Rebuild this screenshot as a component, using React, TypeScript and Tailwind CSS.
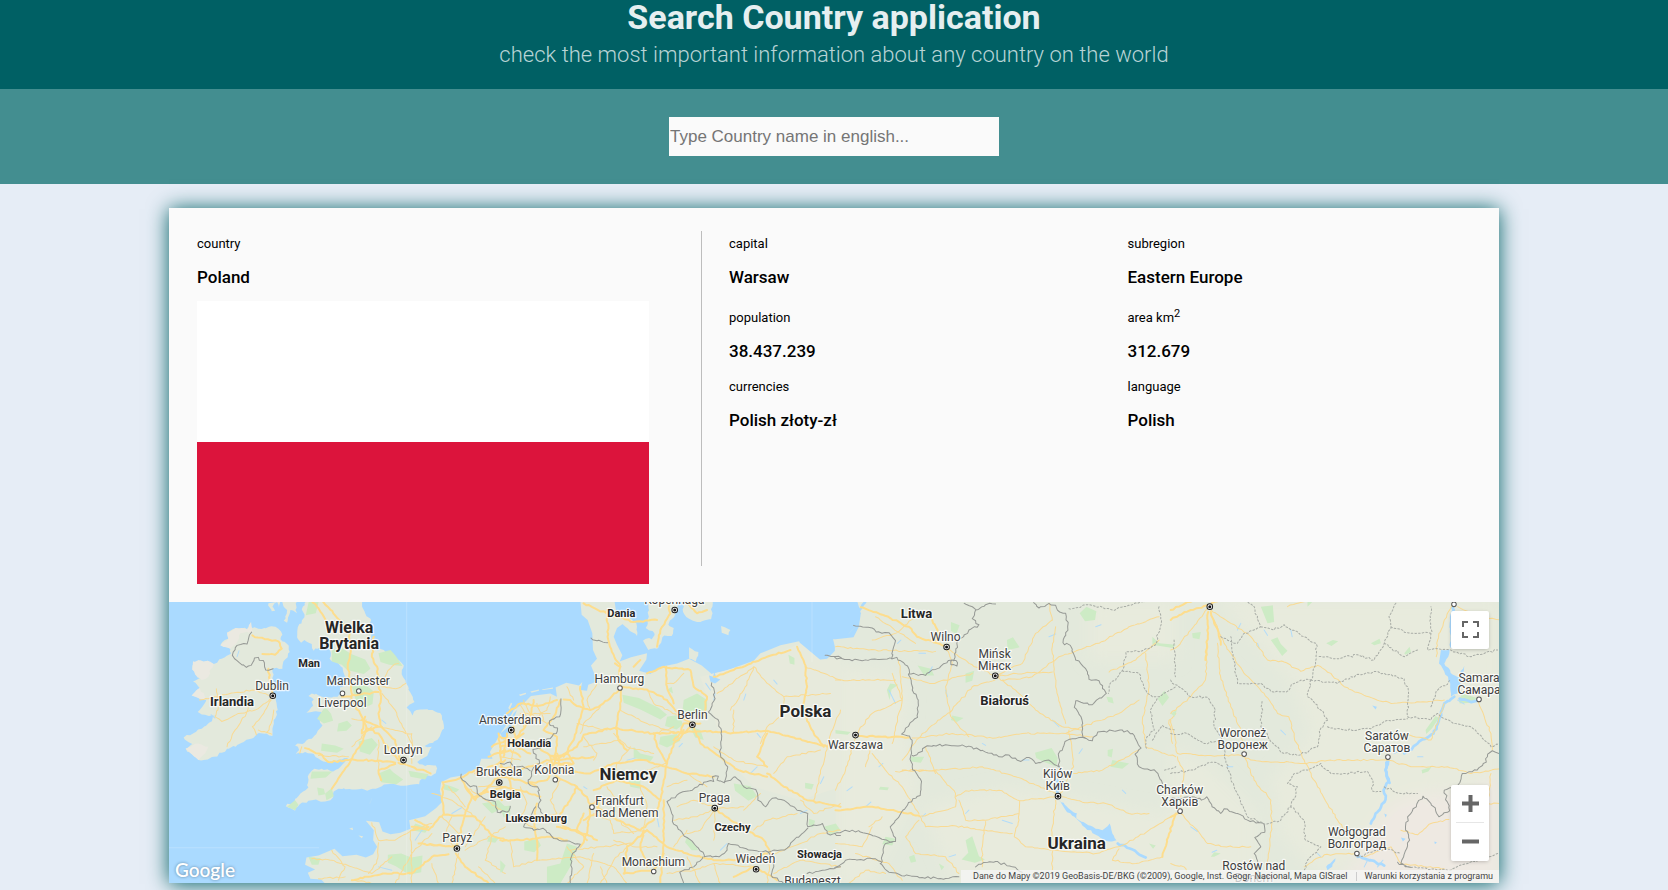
type Sheet = {
  x: number;
  land?: string[];
  tint?: string[];
  sand?: string[];
  woods?: string[];
  water?: string[];
  rivers?: string[];
  streams?: string[];
  motorways?: string[];
  roads?: string[];
  borders?: string[];
  regions?: string[];
};

type Align = "start" | "middle";
type Label = { x: number; y: number; text: string; size?: number; bold?: boolean; align?: Align };
type City = { x: number; y: number; capital?: boolean };

/* The map is described in four sheets, each at three units to the pixel. */
const WEST = -12;
const CENTRE = 993;
const EAST = 1998;
const FAR_EAST = 3003;

const sheets: Sheet[] = [
  {
    x: WEST,
    land: [
      "M426 0L410 28 418 52 398 82 396 112 408 128 418 120 440 132 446 152 468 140 480 132 494 148 498 182 518 188 534 214 542 244 524 262 530 282 500 292 470 290 440 280 430 288 446 298 438 322 424 338 446 334 470 336 464 356 472 376 458 392 440 416 412 432 390 436 402 450 392 462 420 456 446 462 466 480 494 486 530 478 550 474 526 500 504 514 470 506 440 512 428 530 430 562 406 580 388 606 362 618 378 624 390 632 404 612 440 600 480 604 496 600 506 574 536 564 560 568 590 566 606 572 622 566 650 558 690 552 726 556 762 552 776 528 806 522 814 510 812 496 780 498 756 486 786 468 800 440 778 438 804 428 826 402 836 376 830 346 802 330 754 330 742 346 724 322 748 306 736 278 722 248 710 210 716 196 690 168 656 150 628 148 614 118 618 60 600 40 590 0Z",
      "M258 66L262 84 280 86 312 80 340 86 352 104 346 118 366 132 374 156 360 178 352 206 322 206 326 244 318 262 332 300 338 330 326 360 322 408 304 400 276 402 258 416 236 426 212 440 186 446 170 458 146 470 128 478 100 480 80 462 62 446 82 432 56 412 84 400 110 386 132 368 152 346 120 344 98 336 112 320 124 298 100 294 80 286 104 264 84 244 104 234 82 208 84 184 128 182 146 192 170 176 198 160 196 146 166 136 190 116 186 98 212 84 246 88Z",
      "M828 546L856 532 890 526 940 502 948 476 982 476 974 456 990 428 1008 396 1020 380V860H490L468 838 436 836 428 818 450 808 420 794 424 772 460 766 508 746 532 768 574 764 602 772 624 762 636 740 624 720 626 690 602 662 642 666 652 694 676 702 706 698 736 686 732 660 780 648 812 624 832 604 824 572Z",
      "M352 0L366 30 356 62 366 68 376 30 396 40 392 10 400 0Z",
      "M310 10L320 34 330 32 322 20 336 6 342 24 346 4Z",
      "M426 190l8-14 8 2-6 18zM552 686l10-4 2 8zM580 706l14 2-4 6z",
    ],
    sand: [
      "M258 66L246 88 212 84 186 98 190 116 166 136 196 146 214 130 226 100 262 96Z",
      "M84 184L128 182 146 192 130 230 110 240 104 234 82 208ZM80 286L104 264 124 298 100 294ZM62 446L100 430 130 440 120 460 100 480Z",
    ],
    woods: [
      "M500 150l30-6 28 18 42 16 16 28-20 16-50-12-16-16-30-10zM640 160l36-10 16 18 20 30-40-4-26-8zM560 260l40-6 26 20-4 38-30 14-20-26zM480 320l18 22 6 20-28 8-20-14zM520 370l26-8 14 14-16 16-28 2zM470 430l40 6 26 10-20 12-48-6zM580 424l40-10 18 20-24 30-30-10zM640 520l34-14 10 10 30 22-20 14-46-6zM730 512l60 10-10 16-44-8zM456 562l20 4 4 16-20 4zM480 580l20-16 6 24-22 12zM440 514l62 0-20 18-46 4zM366 620l24-20 10 14-10 16zM432 0l30 0-10 40-30 6z",
      "M668 764l40-4 30 12 34-6-4 50-36 8-40-26-24-10zM832 550l30 10 20 8-10 8-36-8zM950 610l50-10 20 20-40 20zM970 710l30 4-10 14-24-4zM750 670l40 14-10 14-40-8zM430 770l36 4-6 20-20 0z",
    ],
    streams: [
      "M216 170l6-18M220 316l14-14M138 344l12 10M650 360l12 10M620 596l-6 14M860 640l30-18M640 800l40 10M750 720l20-30 20-8",
    ],
    motorways: [
      "M310 206L316 250 324 288M262 106L300 118 340 124 350 146 330 164 292 162",
      "M554 100L556 160 548 200 556 250 560 300 590 350 604 384 640 400 672 450 700 480M604 384L590 430 562 472 530 520 500 566",
      "M626 110L620 170 636 200 640 250 648 290 640 340 648 380 690 420 704 480",
      "M530 290L580 284 640 276M420 444L462 460 490 486 550 480 620 480 690 488M700 488L740 500 796 520M648 540L640 510 690 492",
      "M832 546L880 536 930 510M834 548L830 600 836 640 790 690 740 680M890 540L920 590 900 640 880 720 872 750M836 644L930 650 980 706 1020 720M872 760L900 800 970 850M850 762L800 770 740 820 660 820 610 830 560 840M936 590L1010 520M880 740L760 730",
      "M930 520L1020 480M920 590L1020 560M900 560L930 600 960 570 1010 600M980 440L1020 420M970 470L1020 450M1000 400L1010 500M740 690L790 680 750 660",
      "M440 0L470 40 500 90M470 0L550 90M590 360L650 380M600 350L590 400 640 380",
    ],
    roads: [
      "M140 292L190 282 262 270 310 286M154 266L160 320 150 350 170 364 220 340 270 330 300 310 324 292M250 310L244 340 210 390 186 440M318 300L296 340 262 380 274 404M326 330L318 370 306 396M104 300L150 290M280 390L320 402",
      "M650 260L700 264 722 250M650 280L690 330 712 380 740 430M648 380L740 402M560 356L604 360M620 380L560 440M660 230L680 200 700 190M410 440L404 460M460 466L550 470M740 400L740 490M640 420L640 510",
      "M620 668L640 720 690 720 740 690 800 670M640 728L634 790 610 820M736 690L740 850M440 776L500 780 560 800 620 820 680 770M460 836L540 830M900 560L960 600 1020 640M940 560L1000 560M800 580L860 600 930 650M770 730L840 740M900 750L980 706M940 800L990 850M830 650L880 700M560 840L630 850M850 560L900 620M860 650L840 700 870 750M960 650L900 740M1020 680L980 706 960 780 1020 820M690 850L740 760 800 700M500 750L540 800 520 840M800 790L820 850M880 760L860 850",
    ],
    borders: [
      "M260 96L246 132 216 136 202 166 216 182 244 202 258 196 268 174 280 172 298 188 302 210 324 206",
      "M888 522L892 540 916 560 934 558 936 580 962 598 990 604 996 636 1020 634",
    ],
  },
  {
    x: CENTRE,
    land: [
      "M-2 410L20 370 40 330 70 310 92 288 150 280 170 290 166 262 198 248 236 256 246 246 240 270 260 272 264 254 290 244 280 216 272 196 290 176 278 150 276 100 262 60 244 44 240 0H342L348 40 370 70 350 84 340 110 350 134 366 166 358 184 392 172 440 160 438 178 416 212 450 222 482 200 530 190 566 176 604 196 634 222 668 214 720 196 760 182 780 160 840 136 896 124 912 158 948 180 980 176 1006 150 996 112 1022 112V860H-2Z",
      "M434 0L446 30 436 84 462 100 456 124 476 136 486 112 514 108 520 84 504 74 526 40 540 0Z",
      "M552 0L548 36 566 56 590 66 632 58 636 20 634 0ZM358 54L384 48 408 70 410 108 388 92 366 72ZM428 122L446 114 482 126 470 146 444 150ZM662 78L690 90 684 106 664 98ZM566 142L594 156 586 184 566 176Z",
      "M24 324l8-16 4 2-8 18zM56 284l20-6 2 4-18 6zM90 274l26-6 0 4-22 6zM124 268l34-6 0 4-30 4z",
    ],
    tint: [
      "M600 230L760 190 900 130 960 180 1020 176V560L900 600 760 560 680 480 640 350Z",
    ],
    woods: [
      "M366 284l50 10 60 30 24 20-20 14-60-30-50-20zM550 300l40-20 30 20 0 30-40 10-34-6zM500 350l36-6 12 30-20 14-34-10zM480 410l50-8 10 20-40 20-24-10zM400 440l20 20 40 10-10 14-50-10zM570 380l30 10 10 30-26-8zM384 540l36 0 0 26-30-6zM700 550l50 8 20 30-26 14-40-30zM864 164l18 10 0 20-14-4zM560 710l20 20 14 20-20 0-20-24zM72 724l40-8 10 20-20 20-30-6zM140 800l40-10 20-60 30 10-20 60-30 50-40 0zM0 780l16 16-10 20-6 0zM0 620l30-4 0 30-20 6zM914 548l26 4-6 16-20-4zM926 656l18 6-6 20-14-8zM970 680l36-10 14 20-30 14zM500 270l14-10 4 20z",
    ],
    water: ["M626 226l12 4 4-14 6 18 12 4-16 12-14-6z", "M0 400l24-20 16-40 10-10-16 44-10 26-14 20z"],
    streams: [
      "M536 440l10-10M616 250l14 20M380 480l24-6M820 240l10 12M730 300l6-18M640 300l4-20M750 520l20-20M660 750l20-20M960 550l10-20M900 640l20-10M470 650l6 30M250 560l10 6M770 400l10 12",
    ],
    motorways: [
      "M320 30L324 120 340 164 360 200 354 230 362 262M362 266L300 316 270 330 230 318 210 300 190 298M362 262L440 268 500 300 540 350 572 372M362 266L360 320 346 384 354 420 380 450",
      "M0 440L40 430 110 440 170 480 230 440 250 404 340 384 460 400 560 396 620 394 700 398 800 392 880 412 980 440",
      "M20 340L60 310 120 316 170 300M100 300L90 360 50 410 20 440M180 300L160 350 130 390 170 410 165 480 140 540 80 550",
      "M240 260L250 320 236 370 220 420 190 470M498 200L500 260 520 310M460 400L470 440 500 490 490 540 480 600M572 380L520 430 500 490M580 380L600 430 670 480 720 512 800 530",
      "M0 500L60 510 140 480 210 476 280 470M150 490L170 530 230 560 260 590 270 620 260 700 240 740M280 570L350 540 430 560 480 600 460 660 420 690 350 660 290 620",
      "M230 560L210 600 180 640 190 680 240 700M170 510L270 520 340 490 430 480 560 520 640 530M440 690L500 740 560 760 640 780 720 780 800 760M440 690L380 740 372 820M490 600L490 700 480 850M250 10L320 40 400 66 470 60M500 0L510 40 480 90 470 140",
      "M644 624L690 660 740 690 790 720 810 760M800 520L850 560 920 600 1020 620M890 140L912 190 920 260 908 330 940 400 970 440M640 230L700 210 800 170 870 150",
      "M0 720L60 720 150 710 200 720M110 610L100 660 110 720 110 780M0 560L60 570 120 590M700 830L760 800 830 840",
      "M0 410L40 420 70 400M0 460L30 450 60 470M20 400L10 470M40 380L50 440 90 460M150 470L200 460 220 490 160 500 150 470M140 490L210 490M170 460L180 510M0 530L60 540 110 560M20 510L40 590",
      "M800 500L770 470 800 400M400 200L420 180M360 200L344 190M440 220L490 200 570 210 580 260 620 290 610 350M560 10L590 40 620 30",
      "M270 620L300 590 290 640 250 660M250 640L230 690 260 720M170 680L230 690 290 720M370 820L460 810 490 760M430 690L420 740 440 800M550 390L520 420M540 400L550 370 600 370",
    ],
    roads: [
      "M650 280L760 200 800 250 850 290 990 280M690 330L730 270 760 200M850 290L850 340 800 380 780 430M700 398L700 330M914 200L1020 240M980 440L1000 380 1020 330M980 440L960 520 940 600M820 520L860 470 960 450M640 440L700 480 800 500",
      "M520 660L590 650 640 626 730 620M644 624L600 690 560 700M644 630L640 720M530 620L580 600 640 620M730 630L780 580M890 640L800 660 760 690M820 760L900 730 960 700 1020 690M810 760L800 850M820 820L900 780 1020 800",
      "M360 330L440 370 530 400M230 370L320 390M250 440L360 420M40 450L30 500M0 470L60 480M60 340L150 340M70 300L90 340 140 370M520 740L560 690M340 720L400 740 470 740M280 640L330 660 340 700 440 690M210 750L300 740 400 730M110 780L240 770 340 800 380 850M560 520L620 560M500 490L440 510M460 400L520 380M500 560L560 540M280 760L260 850M900 600L940 640 1020 610",
      "M60 310L80 350 70 380M110 310L130 360 60 360M150 290L140 330 110 350M200 260L220 300M290 250L260 300 270 330M300 320L250 370 240 400M440 270L460 310 540 350M550 220L520 250 500 250M250 410L290 460 280 480M340 400L380 440 460 460M390 440L350 490 340 540M180 540L150 600 170 640 110 650M60 560L80 610 60 660 110 690M320 560L350 600 340 650 400 700M420 560L440 620 430 680M200 740L250 800 200 850M300 800L320 850M30 720L40 800 110 780M380 740L340 780 300 850M560 770L600 850M640 790L660 850M500 820L580 810 640 790 760 800",
    ],
    borders: [
      "M272 114L322 128M182 296L178 350 148 362 150 376 172 384 168 400 140 416 120 444 98 448 118 490 96 510 84 550 112 560 122 600 114 620 126 640M0 490L30 486 46 500 66 498 90 512M0 636L26 632 30 618M106 620L90 650 70 680 100 690 128 684 154 708 176 720 240 732 214 768 210 850",
      "M634 248L644 296 624 336 656 366 662 400 660 460 682 500 672 546",
      "M672 548L650 540 654 528 636 530 640 544 610 546 576 570 552 574 500 604 514 640 516 664 560 712 608 756 612 770 656 770 680 750 684 730 756 750 804 756 860 744 880 720 922 684",
      "M672 546L704 530 730 560 766 568 772 600 796 620 816 594 850 600 900 632 922 640 922 680 966 670 980 700 1020 706M608 770L580 800 538 816 550 850M804 756L820 800 812 826 850 850M920 820L1000 806 1020 800",
      "M974 166L1022 173",
    ],
  },
  {
    x: EAST,
    tint: ["M0 0H1020V180H760V0ZM0 190L220 240 210 400 250 560 100 860H0ZM260 620L520 560 1020 650V860H360Z"],
    woods: [
      "M732 40l20-20 30 14-4 26-30 4zM598 458l50-14 18 30-4 26-40-16-20-10zM226 470l40 0-10 18-30-4zM390 720l20-12 20 60 18 10-30 10-40-10 20-20zM514 120l18-8 20 30-36 8zM390 220l26-8-6 30-20 6zM346 66l26 10-10 26-16-10zM246 196l40 10 10 20-30 0zM154 270l10-20 24 4-20 14-6 32zM350 346l34 8-20 12-18-6zM830 480l50 10-20 16-36-6zM950 110l20 20 50 4-10 10-60-10zM966 296l20-24 14 20-20 26zM134 560l26 2-4 8-26-2zM150 710l30 6-10 20-30-4zM220 770l16-6 6 20-16 4zM310 790l16 10-8 10zM812 290l18 2 4 18-16-4zM816 450l16-4-4 26-12-4zM0 390l46 6-10 8-36-4zM940 730l20 6-8 10z",
    ],
    water: [
      "M-12 0H64L76 40 70 80 54 112 0 118H-12Z",
      "M670 598L700 626 724 640 722 654 750 670 780 686 800 690 822 670 830 700 842 720 820 724 780 704 740 676 716 650 690 630Z",
    ],
    rivers: ["M846 730L880 744 930 772M664 540L668 592M72 30L90 0"],
    streams: [
      "M40 100l20-20M160 270l20 40M186 130l10-10M250 160l20 0M290 200l-10 20M330 270l6 20M650 360l20 20M560 480l20 0M730 460l10-14M130 500l12-10M90 620l16-14M270 640l-10 10M340 770l20-6M440 430l10 6M500 660l30 10M50 560l-16 12M860 570l10 10M780 80l16-6M640 110l20-8M390 640l10-10",
    ],
    motorways: [
      "M76 22L140 44 220 80 244 110 330 138M290 60L306 90 300 120M0 630L110 620 180 632 250 646M60 406L120 410 220 412M980 770L1000 700 1020 640",
    ],
    roads: [
      "M0 140L100 150 170 152 300 154M330 140L400 190 480 230 540 270 600 330 680 380 740 390M330 140L350 190 330 260 346 350 400 410M478 240L410 260 350 330 260 400 200 480M480 226L560 190 600 100 650 60M480 230L540 220 650 216M500 240L590 230 670 170 790 130 880 80 970 50",
      "M200 230L290 250 410 220M60 404L110 340 200 300 190 180M0 240L180 240M170 220L200 300 180 380 170 430M230 414L350 400 480 414 560 400 690 400 770 410M700 390L710 460 714 500 670 590M714 520L800 510 910 450M200 510L310 510 440 500 540 530 660 580M180 514L300 512 360 580 360 620 250 650M270 440L300 520M110 460L150 510 200 560 250 640M0 570L30 510 60 410M110 430L90 500",
      "M360 590L390 572 490 570 552 602 660 590M552 602L550 660 536 710 570 740 660 750 780 760 850 740M550 640L450 660 390 660 370 600M450 664L440 740 440 800M250 646L270 680 350 676 450 690 530 700M250 660L210 710 240 760 330 770 370 820M660 600L650 680 650 810M680 590L740 606 810 610 880 640 940 640M850 740L940 690 1020 640M850 746L830 780 900 790 980 770M930 160L940 260 920 360 930 440 1020 470M740 380L850 340 910 300M820 216L900 180 970 120M690 400L740 380M650 60L640 10M660 80L650 140 660 260 690 370M250 40L180 100 110 120M120 50L240 130M110 680L80 740 0 730M100 680L140 650M60 760L160 790 200 840M1020 340L1000 360 1010 430M40 850L90 810 150 820",
    ],
    borders: [
      "M54 76L110 84 122 96 160 98 180 122 168 176 184 172 216 198 230 270 248 300 246 352 210 384 198 402 222 408 230 430 226 466 230 500 258 544 254 586 232 596 164 680 180 724 150 730 136 790",
      "M-2 172L80 182 170 176M220 222L270 226 300 208 350 180 366 188 364 198 346 194 350 180M354 182L366 122 396 100 400 90 430 74 410 56 420 30 450 14 480 12",
      "M386 10L420 28M594 8L610 24 640 10 660 16 672 36 690 40 696 80 682 128 704 136 720 180 750 206 760 238 790 242 812 280 770 314 720 302 716 322 736 350 742 412 770 422 786 396 860 390 890 400 916 444 898 462 910 500 960 514 980 550",
      "M230 466L244 464 270 440 330 434 400 438 450 456 490 470 510 464 556 484 580 472 600 490 640 480 672 502 668 462 696 420 748 412",
      "M-2 700L50 690 130 712 170 726M134 790L160 816 190 822 260 832 340 834 370 830M-2 802L30 780 120 776 136 784M420 800L430 792 480 784 530 800 560 816",
    ],
    regions: [
      "M700 26L760 14 830 30 940 0M970 20L976 74 958 136 920 152 870 156 860 212 820 260 818 280M860 212L910 220 930 270 950 290 970 290 1020 260M964 296L944 330 956 390 934 410 932 444M986 510L1020 500M950 420L980 376 1020 390",
    ],
  },
  {
    x: FAR_EAST,
    tint: ["M140 0H990V580L900 560 800 570 660 700 460 840 330 700 300 540 420 400 360 240Z", "M-2 440L120 500 260 640 260 860H-2Z"],
    sand: ["M600 690L660 610 740 580 900 570 990 520V860H480L560 780Z"],
    woods: [
      "M270 20l36-4 4 50-20 4zM300 120l20-8 10 20 20 20-16 16zM64 100l26-4-4 22-20-4zM466 130l20-10 16 4-20 14zM600 130l26-14 4 14-20 6zM700 160l16-20 4 16-16 8zM764 390l30-42 10 6-20 30-18 18zM864 298l10-18 44 14-16 14-36 2zM752 510l30-10-10 14-18 6zM120 770l10-14 20 4-20 10zM410 0l20 0-20 20zM0 340l18-10-6 20z",
    ],
    water: [
      "M810 150L836 148 832 170 820 190 846 224 862 232 880 196 868 250 860 280 840 290 838 250 820 214 804 190Z",
      "M466 800L494 774 484 800 470 810ZM604 316l14 4-4 8zM690 712l14 4-8 8zM790 724l8 2-6 6zM640 640l8 4-4 8z",
    ],
    rivers: [
      "M848 12L840 70 842 140M850 290L820 310 804 360 788 400 740 430 700 460M652 480L644 510 654 544 638 570 644 598 614 640 600 670M866 296L900 306 926 298M560 770L600 780 640 796",
      "M652 480L644 510 656 548",
    ],
    streams: [
      "M10 600l14-8M200 90l10-20M280 90l10 16M360 90l4 20M260 130l6 16M330 390l14 14M670 460l20-10M740 470l16 0M170 500l16 0M60 680l20 14M124 756l14-6M860 300l20 12M440 760l10 10M580 800l10-20M620 800l16-20",
    ],
    motorways: [
      "M0 60L60 30 110 16 148 0M112 36L112 100 104 180M120 36L136 80 150 134M0 30L50 6 70 0",
      "M20 640L0 650",
    ],
    roads: [
      "M110 26L60 90 20 140 0 150M120 30L180 70 240 110 290 180 340 186 390 214 440 196 480 220 520 260 610 296 660 310 820 300M130 60L160 130 220 220 280 280 320 340 354 350 370 410 400 480 440 560 500 660 560 740M20 460L120 466 210 466 240 480 400 490 480 480 650 480M220 466L250 540 300 600 302 680 290 800",
      "M20 460L10 400 0 360M20 470L40 520 30 590M30 640L80 690 110 730 160 740 240 740M0 790L40 800 60 840M560 760L460 764 400 800M650 480L720 500 830 500 900 520 990 506M922 300L940 350 960 400 964 450M690 690L740 704 780 670 834 658M850 0L820 60 800 120 796 170M0 340L60 290 104 240 110 130M580 770L660 740 690 790 820 806M140 130L146 220 180 320 210 390 220 450",
      "M960 520L950 610 990 612M860 20L920 50 990 60M350 20L410 0M700 400L780 420 820 310",
    ],
    borders: [
      "M0 596L60 590 92 600 108 590 124 620 150 640 160 626 200 640 230 660 280 672 282 696 252 712 270 740 250 760 262 790 266 820",
      "M680 786L722 802 690 790 716 720 704 690 710 650 736 620 756 588 780 610 804 650 836 632 820 570 860 556 874 520 918 510 946 486 950 462 964 452 984 460",
    ],
    regions: [
      "M150 110L200 130 220 100 270 80 250 20 224 0M270 80L310 90 340 74 400 110 436 130 434 184 420 240 390 240 370 250 346 276 300 274 270 250 200 250 180 110M420 240L500 250 540 230 580 222 610 214 640 220 700 236 712 270 710 350 780 360 800 340 840 364 900 380 960 440 990 430M420 240L410 290 450 330 472 360 450 384 440 440 390 464 340 460 300 424 270 380 274 300",
      "M0 240L60 290 110 292 134 330 130 380 160 430 160 470 190 560 230 650 280 672 330 660 360 620 400 660 404 720 450 740 410 780 400 810M360 620L380 560 350 550 370 520 410 510 450 490 480 520 520 520 590 514 606 540 604 572 630 574M470 380L520 390 600 386 640 364 710 356M0 400L50 400 100 430 160 420M0 520L60 510 130 486 160 500M10 120L14 230M640 560L690 580 740 580M680 0L654 50 660 80 640 130 610 180 560 164 500 176 470 170 440 170M660 80L720 100 780 100 780 20M780 100L770 150 800 146 840 150 900 170 980 150M780 320L800 270 840 240M560 770L640 746 690 760M720 802L830 810 890 790 980 760M640 130L700 170 740 150",
    ],
  },
];

const cities: City[] = [
  { x: WEST + 323, y: 287, capital: true },
  { x: WEST + 532, y: 280 },
  { x: WEST + 581, y: 273 },
  { x: WEST + 715, y: 480, capital: true },
  { x: WEST + 875, y: 745, capital: true },
  { x: CENTRE + 33, y: 390, capital: true },
  { x: CENTRE - 3, y: 547, capital: true },
  { x: CENTRE + 165, y: 539 },
  { x: CENTRE + 275, y: 621 },
  { x: CENTRE + 359, y: 264 },
  { x: CENTRE + 523, y: 30, capital: true },
  { x: CENTRE + 576, y: 374, capital: true },
  { x: CENTRE + 643, y: 624, capital: true },
  { x: CENTRE + 460, y: 814 },
  { x: CENTRE + 767, y: 807, capital: true },
  { x: EAST + 60, y: 405, capital: true },
  { x: EAST + 333, y: 141, capital: true },
  { x: EAST + 479, y: 227, capital: true },
  { x: EAST + 667, y: 588, capital: true },
  { x: FAR_EAST + 117, y: 20, capital: true },
  { x: FAR_EAST + 28, y: 633 },
  { x: FAR_EAST + 220, y: 462 },
  { x: FAR_EAST + 651, y: 471 },
  { x: FAR_EAST + 558, y: 760 },
  { x: FAR_EAST + 924, y: 298 },
  { x: FAR_EAST + 849, y: 13 },
];

const labels: Label[] = [
  { x: WEST + 552, y: 98, text: "Wielka", size: 16, bold: true },
  { x: WEST + 552, y: 146, text: "Brytania", size: 16, bold: true },
  { x: WEST + 434, y: 202, text: "Man", size: 11, bold: true },
  { x: WEST + 203, y: 318, text: "Irlandia", size: 13, bold: true },
  { x: WEST + 322, y: 269, text: "Dublin" },
  { x: WEST + 581, y: 256, text: "Manchester" },
  { x: WEST + 533, y: 322, text: "Liverpool" },
  { x: WEST + 716, y: 461, text: "Londyn" },
  { x: WEST + 876, y: 727, text: "Paryż" },
  { x: CENTRE + 32, y: 373, text: "Amsterdam" },
  { x: CENTRE + 87, y: 440, text: "Holandia", size: 11, bold: true },
  { x: CENTRE - 1, y: 528, text: "Bruksela" },
  { x: CENTRE + 17, y: 594, text: "Belgia", size: 11, bold: true },
  { x: CENTRE + 109, y: 667, text: "Luksemburg", size: 11, bold: true },
  { x: CENTRE + 164, y: 521, text: "Kolonia" },
  { x: CENTRE + 365, y: 51, text: "Dania", size: 11, bold: true },
  { x: CENTRE + 523, y: 11, text: "Kopenhaga" },
  { x: CENTRE + 359, y: 248, text: "Hamburg" },
  { x: CENTRE + 576, y: 356, text: "Berlin" },
  { x: CENTRE + 384, y: 540, text: "Niemcy", size: 17, bold: true },
  { x: CENTRE + 287, y: 616, text: "Frankfurt", align: "start" },
  { x: CENTRE + 287, y: 652, text: "nad Menem", align: "start" },
  { x: CENTRE + 643, y: 607, text: "Praga" },
  { x: CENTRE + 698, y: 693, text: "Czechy", size: 11, bold: true },
  { x: CENTRE + 459, y: 797, text: "Monachium" },
  { x: CENTRE + 767, y: 789, text: "Wiedeń" },
  { x: CENTRE + 916, y: 351, text: "Polska", size: 17, bold: true },
  { x: CENTRE + 959, y: 773, text: "Słowacja", size: 11, bold: true },
  { x: CENTRE + 938, y: 856, text: "Budapeszt" },
  { x: EAST + 60, y: 448, text: "Warszawa" },
  { x: EAST + 244, y: 53, text: "Litwa", size: 13, bold: true },
  { x: EAST + 332, y: 122, text: "Wilno" },
  { x: EAST + 479, y: 173, text: "Mińsk" },
  { x: EAST + 478, y: 209, text: "Мінск" },
  { x: EAST + 509, y: 315, text: "Białoruś", size: 13, bold: true },
  { x: EAST + 667, y: 535, text: "Kijów" },
  { x: EAST + 667, y: 571, text: "Київ" },
  { x: EAST + 724, y: 746, text: "Ukraina", size: 17, bold: true },
  { x: FAR_EAST + 28, y: 581, text: "Charków" },
  { x: FAR_EAST + 28, y: 617, text: "Харків" },
  { x: FAR_EAST + 218, y: 412, text: "Woroneż" },
  { x: FAR_EAST + 218, y: 447, text: "Воронеж" },
  { x: FAR_EAST + 650, y: 419, text: "Saratów" },
  { x: FAR_EAST + 650, y: 455, text: "Саратов" },
  { x: FAR_EAST + 558, y: 708, text: "Wołgograd" },
  { x: FAR_EAST + 558, y: 744, text: "Волгоград" },
  { x: FAR_EAST + 924, y: 247, text: "Samara" },
  { x: FAR_EAST + 924, y: 282, text: "Самара" },
  { x: FAR_EAST + 251, y: 811, text: "Rostów nad" },
  { x: FAR_EAST + 251, y: 847, text: "Donem" },
];

/* Bends the long straight runs of a line so that coasts and frontiers look natural. */
function roughen(path: string, amount: number): string {
  let seed = path.length;
  const noise = () => {
    seed = (seed * 16807 + 11) % 2147483647;
    return (seed / 2147483647 - 0.5) * amount;
  };
  return path
    .split("M")
    .filter(Boolean)
    .map((part) => {
      if (part.includes("l") || part.includes("H") || part.includes("V")) return "M" + part;
      const closed = part.includes("Z");
      const n = part.replace(/[LZ]/g, " ").trim().split(/\s+/).map(Number);
      let out = `M${n[0]} ${n[1]}`;
      for (let i = 2; i < n.length; i += 2) {
        const [ax, ay, bx, by] = [n[i - 2], n[i - 1], n[i], n[i + 1]];
        const steps = Math.max(1, Math.round(Math.hypot(bx - ax, by - ay) / 9));
        for (let s = 1; s < steps; s++) {
          const x = ax + ((bx - ax) * s) / steps + noise();
          const y = ay + ((by - ay) * s) / steps + noise();
          out += `L${x.toFixed(1)} ${y.toFixed(1)}`;
        }
        out += `L${bx} ${by}`;
      }
      return out + (closed ? "Z" : "");
    })
    .join("");
}

function Lines({ paths, color, width, rough = 0, dash }: { paths?: string[]; color: string; width: number; rough?: number; dash?: string }) {
  return (
    <g fill="none" stroke={color} strokeWidth={width} strokeLinejoin="round" strokeLinecap="round" strokeDasharray={dash}>
      {paths?.map((d, i) => <path key={i} d={rough ? roughen(d, rough) : d} />)}
    </g>
  );
}

function Areas({ paths, color, rough = 0 }: { paths?: string[]; color: string; rough?: number }) {
  return <g fill={color}>{paths?.map((d, i) => <path key={i} d={rough ? roughen(d, rough) : d} />)}</g>;
}

function MapDrawing() {
  return (
    <svg viewBox="0 0 1329 281" preserveAspectRatio="xMinYMin slice" className="block h-full w-full" role="img" aria-label="Map">
      <defs>
        <filter id="soft" x="-10%" y="-10%" width="120%" height="120%">
          <feGaussianBlur stdDeviation="24" />
        </filter>
        <clipPath id="east">
          <rect x="1998" y="0" width="2000" height="860" />
        </clipPath>
      </defs>
      <rect width="1329" height="281" fill="#aadaff" />
      <g transform="scale(0.33333)">
        <rect x="1996" width="2010" height="860" fill="#e3e9dc" />
        {sheets.map((s) => (
          <g key={s.x} transform={`translate(${s.x} -6)`}>
            <Areas paths={s.land} color="#e3e9dc" rough={8} />
          </g>
        ))}
        <g clipPath="url(#east)" filter="url(#soft)">
          {sheets.slice(2).map((s) => (
            <g key={s.x} transform={`translate(${s.x} -6)`}>
              <Areas paths={s.tint} color="#e8ebdd" />
              <Areas paths={s.sand} color="#eee9e2" />
            </g>
          ))}
        </g>
        {sheets.map((s) => (
          <g key={s.x} transform={`translate(${s.x} -6)`}>
            {s.x < EAST && <Areas paths={s.tint} color="#e7eadc" />}
            {s.x < EAST && <Areas paths={s.sand} color="#ebe9e1" rough={6} />}
            <Areas paths={s.woods} color="#cdebc5" />
            <Areas paths={s.water} color="#aadaff" rough={5} />
            <Lines paths={s.rivers} color="#aadaff" width={8} rough={6} />
            <Lines paths={s.streams} color="#b2dcfa" width={3} />
            <Lines paths={s.roads} color="#f9da93" width={3} rough={5} />
            <Lines paths={s.motorways} color="#fddd8d" width={6} rough={5} />
            <Lines paths={s.borders} color="#969995" width={3} rough={7} />
            <Lines paths={s.regions} color="#a8aca6" width={3} rough={7} dash="5 6" />
          </g>
        ))}
      </g>
      <path d="M237.500 0V281M642.500 0V60M0 245.500H150" fill="none" stroke="#ffffff" strokeOpacity="0.2" />
      {cities.map((c) => (
        <g key={`${c.x}-${c.y}`} transform={`translate(${c.x / 3} ${(c.y - 6) / 3})`}>
          <circle r={c.capital ? 2.8 : 2.3} fill="#ffffff" stroke={c.capital ? "#222222" : "#555555"} strokeWidth="1" />
          {c.capital && <circle r="1.500" fill="#111111" />}
        </g>
      ))}
      {labels.map((l) => (
        <text
          key={l.text}
          x={Math.floor(l.x / 3)}
          y={Math.round((l.y - 6) / 3)}
          fontSize={l.size ?? 12}
          textAnchor={l.align ?? "middle"}
          fill={l.bold ? "#262626" : "#404040"}
          stroke="#ffffff"
          strokeOpacity="0.75"
          strokeWidth="2.500"
          strokeLinejoin="round"
          paintOrder="stroke"
          className={l.bold ? "font-bold" : "font-normal"}
        >
          {l.text}
        </text>
      ))}
    </svg>
  );
}

function CountryMap() {
  return (
    <div className="relative h-[281px] overflow-hidden bg-[#aadaff]">
      <MapDrawing />
      <a href="#google" className="absolute bottom-px left-1.5 font-['Lato',sans-serif] text-[19px] leading-6 font-semibold text-white [text-shadow:0_0_3px_#5b7f9c]">
        Google
      </a>
      <button type="button" aria-label="Fullscreen" className="absolute top-[9px] right-[10px] flex size-[38px] items-center justify-center rounded-xs bg-white shadow-[0_1px_4px_-1px_rgba(0,0,0,0.3)]">
        <svg viewBox="0 0 17 17" className="size-[17px]" fill="none" stroke="#666666" strokeWidth="2">
          <path d="M1 6V1H6M11 1H16V6M16 11V16H11M6 16H1V11" />
        </svg>
      </button>
      <div className="absolute right-[10px] bottom-[22px] flex w-[38px] flex-col items-center rounded-xs bg-white shadow-[0_1px_4px_-1px_rgba(0,0,0,0.3)]">
        <button type="button" aria-label="Zoom in" className="flex h-[37px] w-full items-center justify-center">
          <svg viewBox="0 0 17 17" className="size-[17px]" stroke="#666666" strokeWidth="4">
            <path d="M8.500 0V17M0 8.500H17" />
          </svg>
        </button>
        <div className="h-px w-7 bg-[#e6e6e6]" />
        <button type="button" aria-label="Zoom out" className="flex h-[38px] w-full items-center justify-center">
          <svg viewBox="0 0 17 17" className="size-[17px]" stroke="#666666" strokeWidth="4">
            <path d="M0 8.500H17" />
          </svg>
        </button>
      </div>
      <div className="absolute right-0 bottom-0 flex h-[13px] items-center bg-[#f5f5f5]/75 pr-1.5 pl-3 text-[9px] leading-3 text-[#444444]">
        <span>Dane do Mapy ©2019 GeoBasis-DE/BKG (©2009), Google, Inst. Geogr. Nacional, Mapa GISrael</span>
        <span className="mx-2 h-[9px] w-px bg-[#cccccc]" />
        <a href="#terms">Warunki korzystania z programu</a>
      </div>
    </div>
  );
}

function Fact({ label, value, sup }: { label: string; value: string; sup?: string }) {
  return (
    <div className={sup ? "pt-[5px]" : ""}>
      <dt className="text-[13px] leading-5">
        {label}
        {sup && <sup className="text-[11px]">{sup}</sup>}
      </dt>
      <dd className="mt-3 text-[17px] leading-[22px] font-medium">{value}</dd>
    </div>
  );
}

const facts = [
  { label: "capital", value: "Warsaw" },
  { label: "subregion", value: "Eastern Europe" },
  { label: "population", value: "38.437.239" },
  { label: "area km", value: "312.679", sup: "2" },
  { label: "currencies", value: "Polish złoty-zł" },
  { label: "language", value: "Polish" },
];

export default function App() {
  return (
    <div className="min-h-screen bg-[#e6edf6] pb-[7px] font-['Roboto',sans-serif] text-black">
      <header className="bg-[#006064] pb-[13px] text-center">
        <h1 className="text-[34px] leading-[34px] font-bold text-[#e5eff0]">Search Country application</h1>
        <p className="text-[22px] leading-[42px] font-light text-[#b8d4d6]">check the most important information about any country on the world</p>
      </header>
      <form className="flex justify-center bg-[#438e90] py-7" onSubmit={(e) => e.preventDefault()}>
        <input
          type="text"
          aria-label="Country name"
          placeholder="Type Country name in english..."
          className="h-[39px] w-full max-w-[330px] bg-[#fafafa] px-px font-['Liberation_Sans',sans-serif] text-[17px] placeholder:text-[#757575] focus:outline-none"
        />
      </form>
      <main className="mx-auto mt-6 max-w-[1330px] bg-[#fafafa] shadow-[0_1px_20px_#006064]">
        <section className="flex items-stretch">
          <dl className="w-2/5 px-7 pt-[26px] pb-[18px]">
            <Fact label="country" value="Poland" />
            <div role="img" aria-label="Flag of Poland" className="mt-[13px] flex aspect-[8/5] w-[95%] flex-col bg-white">
              <div className="mt-auto h-1/2 bg-[#dc143c]" />
            </div>
          </dl>
          <dl className="mt-[23px] mb-9 grid w-3/5 grid-cols-2 content-start items-end gap-y-[15px] border-l border-[#bdbdbd] pt-[3px] *:pl-[27px]">
            {facts.map((f) => (
              <Fact key={f.label} {...f} />
            ))}
          </dl>
        </section>
        <CountryMap />
      </main>
    </div>
  );
}
